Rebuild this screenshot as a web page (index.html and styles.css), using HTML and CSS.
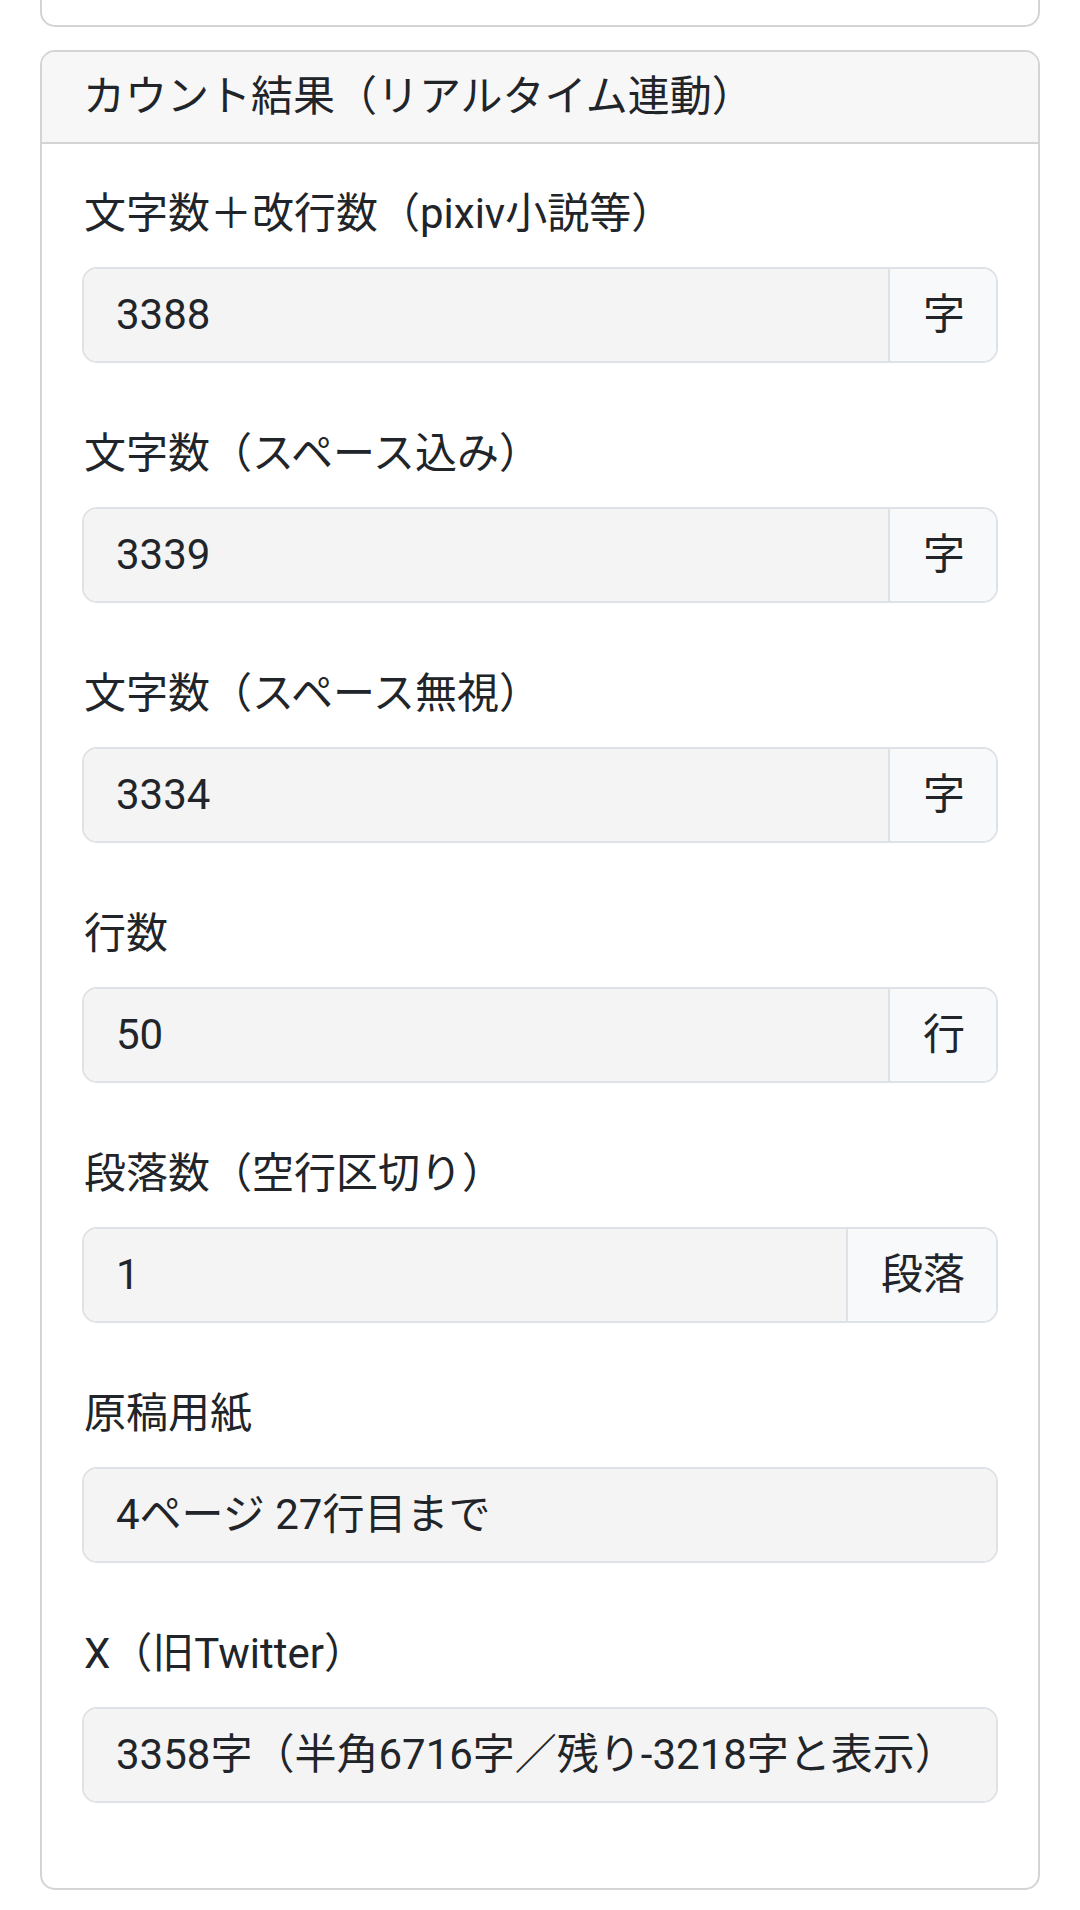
FILE: index.html
```html
<!DOCTYPE html>
<html lang="ja">
<head>
<meta charset="utf-8">
<title>カウント結果</title>
<link rel="stylesheet" href="styles.css">
</head>
<body>
<div class="page">
  <div class="card card-prev"></div>
  <div class="card">
    <div class="card-header">カウント結果（リアルタイム連動）</div>
    <div class="card-body">
      <div class="group">
        <div class="label">文字数＋改行数（pixiv小説等）</div>
        <div class="input-group">
          <div class="field">3388</div>
          <div class="addon">字</div>
        </div>
      </div>
      <div class="group">
        <div class="label">文字数（スペース込み）</div>
        <div class="input-group">
          <div class="field">3339</div>
          <div class="addon">字</div>
        </div>
      </div>
      <div class="group">
        <div class="label">文字数（スペース無視）</div>
        <div class="input-group">
          <div class="field">3334</div>
          <div class="addon">字</div>
        </div>
      </div>
      <div class="group">
        <div class="label">行数</div>
        <div class="input-group">
          <div class="field">50</div>
          <div class="addon">行</div>
        </div>
      </div>
      <div class="group">
        <div class="label">段落数（空行区切り）</div>
        <div class="input-group">
          <div class="field">1</div>
          <div class="addon">段落</div>
        </div>
      </div>
      <div class="group">
        <div class="label">原稿用紙</div>
        <div class="input-group">
          <div class="field solo">4ページ 27行目まで</div>
        </div>
      </div>
      <div class="group">
        <div class="label">X（旧Twitter）</div>
        <div class="input-group">
          <div class="field solo">3358字（半角6716字／残り-3218字と表示）</div>
        </div>
      </div>
    </div>
  </div>
</div>
</body>
</html>
```
FILE: styles.css
```css
html, body {
  margin: 0;
  padding: 0;
  background: #ffffff;
}
body {
  font-family: Roboto, "Noto Sans CJK JP", "Noto Sans", sans-serif;
  font-size: 42px;
  line-height: 60px;
  color: #212529;
}
.page {
  padding: 0 40px 18px 40px;
  display: flex;
  flex-direction: column;
  gap: 23px;
}
.card {
  border: 2px solid #d4d4d5;
  border-radius: 15px;
  background: #ffffff;
  overflow: hidden;
}
.card-prev {
  height: 25px;
  border-top: none;
  border-radius: 0 0 15px 15px;
}
.card-header {
  background: #f7f7f7;
  border-bottom: 2px solid #d4d4d5;
  padding: 15px 41px 15px 41px;
}
.card-body {
  padding: 40px 40px 85px 40px;
  display: flex;
  flex-direction: column;
  gap: 61px;
}
.group {
  display: flex;
  flex-direction: column;
  gap: 23px;
}
.label {
  height: 60px;
  padding-left: 2px;
}
.input-group {
  display: flex;
  border: 2px solid #dee2e6;
  border-radius: 15px;
  overflow: hidden;
}
.field {
  flex: 1;
  background: #f4f4f5;
  padding: 16px 30px 16px 32px;
  white-space: nowrap;
}
.addon {
  background: #f8f9fa;
  border-left: 2px solid #dee2e6;
  padding: 16px 31px 16px 33px;
  white-space: nowrap;
}
```
